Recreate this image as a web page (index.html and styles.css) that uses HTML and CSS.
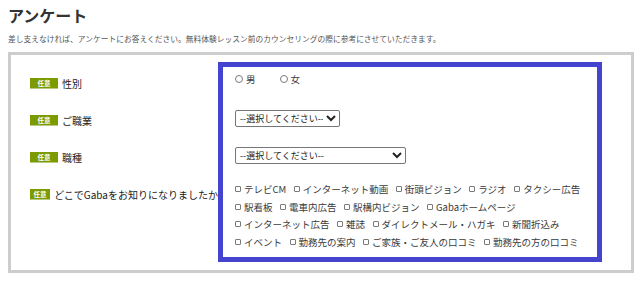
FILE: index.html
```html
<!DOCTYPE html>
<html lang="ja">
<head>
  <meta charset="UTF-8">
  <meta name="viewport" content="width=device-width, initial-scale=1.0">
  <title>アンケート</title>
  <link rel="stylesheet" href="styles.css">
</head>
<body>
  <h1 class="title">アンケート</h1>
  <p class="lead">差し支えなければ、アンケートにお答えください。無料体験レッスン前のカウンセリングの際に参考にさせていただきます。</p>

  <div class="survey">
    <!-- question labels -->
    <div class="labels">
      <div class="label-row"><span class="badge">任意</span>性別</div>
      <div class="label-row"><span class="badge">任意</span>ご職業</div>
      <div class="label-row"><span class="badge">任意</span>職種</div>
      <div class="label-row"><span class="badge">任意</span>どこでGabaをお知りになりましたか</div>
    </div>

    <!-- answer fields -->
    <div class="fields">
      <div class="radios">
        <label class="opt radio-opt"><input type="radio" name="gender">男</label>
        <label class="opt radio-opt"><input type="radio" name="gender">女</label>
      </div>

      <select class="sel sel-job">
        <option>--選択してください--</option>
      </select>

      <select class="sel sel-type">
        <option>--選択してください--</option>
      </select>

      <div class="checks">
        <div class="check-row">
          <label class="opt"><input type="checkbox">テレビCM</label>
          <label class="opt"><input type="checkbox">インターネット動画</label>
          <label class="opt"><input type="checkbox">街頭ビジョン</label>
          <label class="opt"><input type="checkbox">ラジオ</label>
          <label class="opt"><input type="checkbox">タクシー広告</label>
        </div>
        <div class="check-row">
          <label class="opt"><input type="checkbox">駅看板</label>
          <label class="opt"><input type="checkbox">電車内広告</label>
          <label class="opt"><input type="checkbox">駅構内ビジョン</label>
          <label class="opt"><input type="checkbox">Gabaホームページ</label>
        </div>
        <div class="check-row">
          <label class="opt"><input type="checkbox">インターネット広告</label>
          <label class="opt"><input type="checkbox">雑誌</label>
          <label class="opt"><input type="checkbox">ダイレクトメール・ハガキ</label>
          <label class="opt"><input type="checkbox">新聞折込み</label>
        </div>
        <div class="check-row">
          <label class="opt"><input type="checkbox">イベント</label>
          <label class="opt"><input type="checkbox">勤務先の案内</label>
          <label class="opt"><input type="checkbox">ご家族・ご友人の口コミ</label>
          <label class="opt"><input type="checkbox">勤務先の方の口コミ</label>
        </div>
      </div>
    </div>
  </div>
</body>
</html>
```

FILE: styles.css
```css
body {
  margin: 0;
  padding: 0 8px;
  font-family: "Noto Sans CJK JP", sans-serif;
  color: #333;
  background: #fff;
}
.title {
  margin: 5px 0 0;
  font-size: 16px;
  line-height: 20px;
  font-weight: bold;
  color: #333;
}
.lead {
  margin: 8px 0 0;
  font-size: 7.75px;
  line-height: 12px;
  color: #555;
  white-space: nowrap;
}
.survey {
  display: flex;
  width: 626px;
  height: 221px;
  box-sizing: border-box;
  margin-top: 7px;
  border: 3px solid #cdcdcd;
  padding: 7px 0 0;
}
.labels {
  width: 207px;
  flex-shrink: 0;
  padding: 2.5px 0 0 19px;
  box-sizing: border-box;
}
.label-row {
  display: flex;
  align-items: center;
  height: 37px;
  font-size: 10px;
  color: #222;
  white-space: nowrap;
}
.badge {
  display: inline-block;
  width: 28px;
  height: 10px;
  margin-right: 4px;
  background: #7c9b00;
  border-bottom: 1px solid #b9c97e;
  color: #fff;
  font-size: 6.5px;
  line-height: 10px;
  text-align: center;
  font-weight: bold;
}
.fields {
  position: relative;
  width: 384px;
  height: 200px;
  box-sizing: border-box;
  border: 5px solid #4444cf;
  background: #fff;
  padding: 5px 12px;
  display: flex;
  flex-direction: column;
  align-items: flex-start;
  font-size: 9.5px;
  color: #3a3a3a;
}
.radios {
  display: flex;
  height: 14px;
  align-items: center;
}
.opt {
  display: inline-flex;
  align-items: center;
  white-space: nowrap;
  margin-right: 7.5px;
}
.radio-opt {
  margin-right: 24px;
}
.opt input {
  appearance: none;
  margin: 0 3px 0 0;
  flex-shrink: 0;
  border: 1px solid #7a7a7a;
  background: #fff;
}
.opt input[type="radio"] {
  width: 8px;
  height: 8px;
  border-radius: 50%;
}
.opt input[type="checkbox"] {
  width: 6px;
  height: 6px;
  border-radius: 1px;
}
.sel {
  height: 17px;
  font-family: "Noto Sans CJK JP", sans-serif;
  font-size: 9px;
  color: #222;
  border: 1px solid #767676;
  border-radius: 2px;
  background: #fff;
  padding: 0;
}
.sel-job {
  width: 105px;
  margin-top: 24px;
}
.sel-type {
  width: 171px;
  margin-top: 20px;
}
.checks {
  margin-top: 16.5px;
}
.check-row {
  display: flex;
  height: 17.5px;
  align-items: center;
}
```
